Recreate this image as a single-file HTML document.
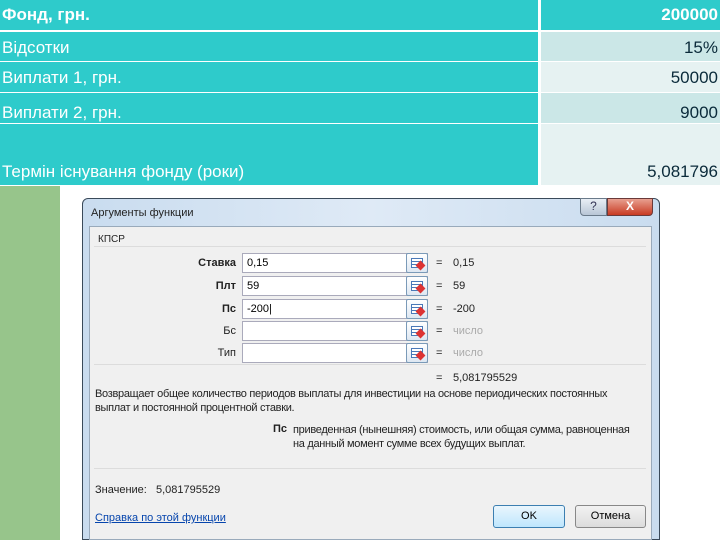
<!DOCTYPE html>
<html><head><meta charset="utf-8"><style>
*{margin:0;padding:0;box-sizing:border-box}
body{width:720px;height:540px;overflow:hidden;background:#fff;font-family:"Liberation Sans",sans-serif;position:relative}
.a{position:absolute}
.l{left:0;width:538px;background:#2ecbcb;color:#fff;font-size:17px;padding-left:2px}
.r{left:541px;width:179px;color:#0a2a3a;font-size:17px;text-align:right;padding-right:2px}
.d{font-size:11px;color:#222}
.inp{position:absolute;left:242px;width:186px;height:20px;background:#fff;border:1px solid #aab;font-size:11px;padding:3px 4px}
.btn{position:absolute;left:406px;width:22px;height:20px;border:1px solid #7a9ab8;border-radius:2px;background:linear-gradient(#fff,#dde7f2)}
.btn i{position:absolute;left:4px;top:4px;width:12px;height:10px;background:repeating-linear-gradient(#fff 0 2px,#4a79b8 2px 3px);border:1px solid #4a79b8}
.btn b{position:absolute;left:10px;top:8px;width:7px;height:7px;background:#d33;transform:rotate(45deg)}
.lab{position:absolute;width:150px;left:86px;text-align:right;font-size:11px;color:#222}
.eq{position:absolute;left:436px;font-size:11px;color:#222}
.val{position:absolute;left:453px;font-size:11px;color:#222}
.nw{white-space:nowrap;letter-spacing:-0.3px}
</style></head><body>
<div class="a l" style="top:0;height:30px;line-height:30px;font-weight:bold">Фонд, грн.</div>
<div class="a r" style="top:0;height:30px;line-height:30px;background:#2ecbcb;color:#fff;font-weight:bold">200000</div>
<div class="a l" style="top:32px;height:29px;line-height:32px">Відсотки</div>
<div class="a r" style="top:32px;height:29px;line-height:32px;background:#cbe7e7">15%</div>
<div class="a l" style="top:62px;height:30px;line-height:32px">Виплати 1, грн.</div>
<div class="a r" style="top:62px;height:30px;line-height:32px;background:#e6f2f2">50000</div>
<div class="a l" style="top:93px;height:30px;line-height:40px">Виплати 2, грн.</div>
<div class="a r" style="top:93px;height:30px;line-height:40px;background:#cbe7e7">9000</div>
<div class="a l" style="top:124px;height:61px;padding-top:38px">Термін існування фонду (роки)</div>
<div class="a r" style="top:124px;height:61px;padding-top:38px;background:#e6f2f2">5,081796</div>
<div class="a" style="left:0;top:186px;width:60px;height:354px;background:#97c58b"></div>

<div class="a" style="left:82px;top:198px;width:578px;height:342px;background:linear-gradient(90deg,#c9dcef,#dfeaf6 50%,#c9dcef);border:1px solid #3a4a5a;border-radius:6px 6px 0 0"></div>
<div class="a d" style="left:91px;top:207px">Аргументы функции</div>
<div class="a" style="left:580px;top:198px;width:27px;height:18px;background:linear-gradient(#e8eef5,#b8c6d6);border:1px solid #6a7a8a;border-radius:0 0 0 4px;text-align:center;font-size:12px;color:#335">?</div>
<div class="a" style="left:607px;top:198px;width:46px;height:18px;background:linear-gradient(#e8a090,#c83a22);border:1px solid #6a3a3a;border-radius:0 0 4px 0;text-align:center;font-size:12px;color:#fff;font-weight:bold">X</div>
<div class="a" style="left:89px;top:226px;width:563px;height:314px;background:#f0f0f0;border:1px solid #9ab"></div>
<div class="a d" style="left:98px;top:234px;font-size:10px">КПСР</div>
<div class="a" style="left:94px;top:246px;width:552px;height:1px;background:#dcdcdc"></div>
<div class="a" style="left:94px;top:364px;width:552px;height:1px;background:#dcdcdc"></div>

<div class="lab" style="top:257px;font-weight:bold">Ставка</div><div class="inp" style="top:253px">0,15</div><div class="btn" style="top:253px"><i></i><b></b></div><div class="eq" style="top:257px">=</div><div class="val" style="top:257px">0,15</div>
<div class="lab" style="top:280px;font-weight:bold">Плт</div><div class="inp" style="top:276px">59</div><div class="btn" style="top:276px"><i></i><b></b></div><div class="eq" style="top:280px">=</div><div class="val" style="top:280px">59</div>
<div class="lab" style="top:303px;font-weight:bold">Пс</div><div class="inp" style="top:299px">-200|</div><div class="btn" style="top:299px"><i></i><b></b></div><div class="eq" style="top:303px">=</div><div class="val" style="top:303px">-200</div>
<div class="lab" style="top:325px">Бс</div><div class="inp" style="top:321px"></div><div class="btn" style="top:321px"><i></i><b></b></div><div class="eq" style="top:325px">=</div><div class="val" style="top:325px;color:#aaa">число</div>
<div class="lab" style="top:347px">Тип</div><div class="inp" style="top:343px"></div><div class="btn" style="top:343px"><i></i><b></b></div><div class="eq" style="top:347px">=</div><div class="val" style="top:347px;color:#aaa">число</div>

<div class="eq" style="top:372px">=</div><div class="val" style="top:372px">5,081795529</div>
<div class="a d nw" style="left:95px;top:387px;line-height:14px">Возвращает общее количество периодов выплаты для инвестиции на основе периодических постоянных<br>выплат и постоянной процентной ставки.</div>
<div class="a d" style="left:273px;top:423px;font-weight:bold">Пс</div>
<div class="a d nw" style="left:293px;top:423px;line-height:14px">приведенная (нынешняя) стоимость, или общая сумма, равноценная<br>на данный момент сумме всех будущих выплат.</div>
<div class="a" style="left:94px;top:468px;width:552px;height:1px;background:#dcdcdc"></div>
<div class="a d" style="left:95px;top:484px">Значение:&nbsp;&nbsp; 5,081795529</div>
<div class="a d" style="left:95px;top:512px;color:#0645ad;text-decoration:underline">Справка по этой функции</div>
<div class="a" style="left:493px;top:505px;width:72px;height:23px;border:1px solid #3c7fb1;border-radius:3px;background:linear-gradient(#eaf6fd,#bee6fd);text-align:center;font-size:11px;line-height:21px">OK</div>
<div class="a" style="left:575px;top:505px;width:71px;height:23px;border:1px solid #888;border-radius:3px;background:linear-gradient(#f2f2f2,#dcdcdc);text-align:center;font-size:11px;line-height:21px">Отмена</div>
</body></html>
